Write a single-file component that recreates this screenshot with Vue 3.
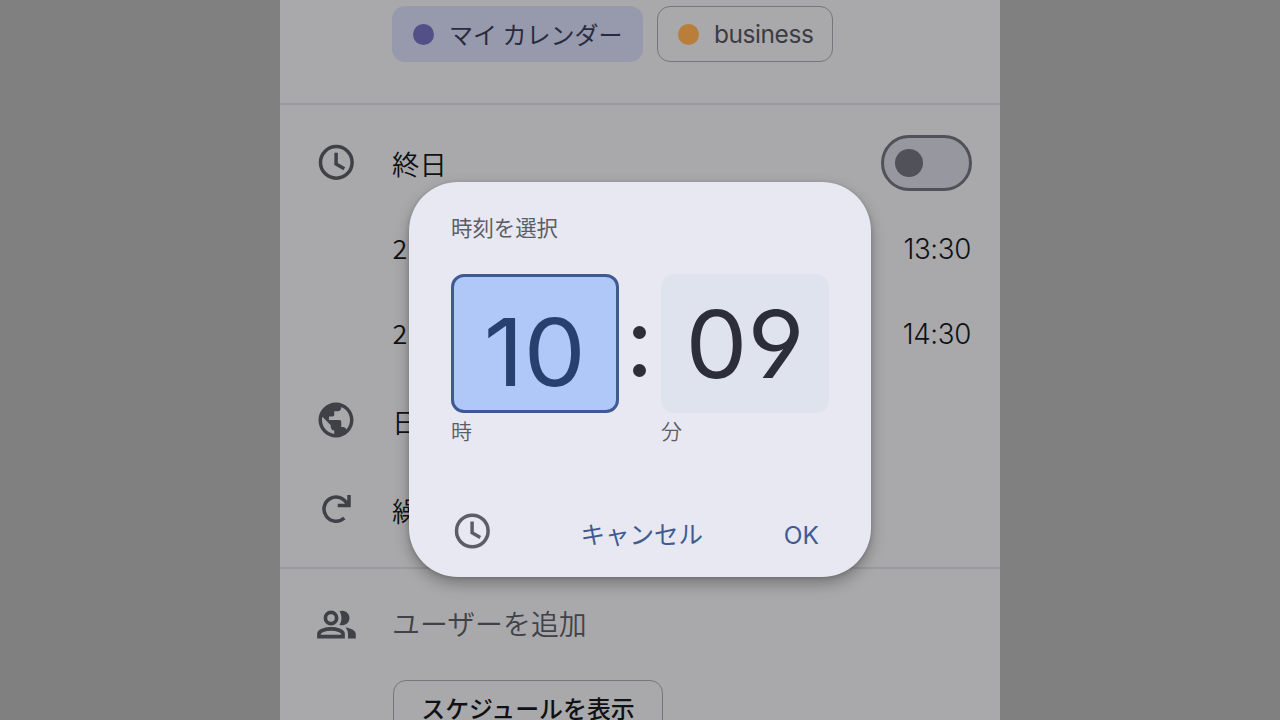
<script setup>
const chips = [
  { label: 'マイ カレンダー', kind: 'mine' },
  { label: 'business', kind: 'business' },
]
</script>

<template>
  <main class="stage">
    <section class="phone">
      <div class="chips">
        <div v-for="c in chips" :key="c.kind" class="chip" :class="c.kind">
          <i class="dot"></i><span>{{ c.label }}</span>
        </div>
      </div>
      <hr />
      <div class="rows">
        <div class="row allday">
          <svg class="icon line" viewBox="0 0 42 42">
            <circle cx="21.3" cy="20.4" r="15.8" /><path d="M21.1 10.8v11.3l8.2 4.7" />
          </svg>
          <span class="label jp">終日</span>
          <span class="switch"><i></i></span>
        </div>
        <div class="row start">
          <span class="label digit">2</span><span class="time">13:30</span>
        </div>
        <div class="row end">
          <span class="label digit">2</span><span class="time">14:30</span>
        </div>
        <div class="row zone">
          <svg class="icon" viewBox="0 0 24 24">
            <path d="M12 2C6.48 2 2 6.48 2 12s4.48 10 10 10 10-4.48 10-10S17.52 2 12 2zm-1 17.93c-3.95-.49-7-3.85-7-7.93 0-.62.08-1.21.21-1.79L9 15v1c0 1.1.9 2 2 2v1.93zm6.9-2.54c-.26-.81-1-1.39-1.9-1.39h-1v-3c0-.55-.45-1-1-1H8v-2h2c.55 0 1-.45 1-1V7h2c1.1 0 2-.9 2-2v-.41c2.93 1.19 5 4.06 5 7.41 0 2.08-.8 3.97-2.1 5.39z" />
          </svg>
          <span class="label jp">日本標準時</span>
        </div>
        <div class="row repeat">
          <svg class="icon line" viewBox="0 0 42 42">
            <path d="M32.2 17.3A12.1 12.1 0 1 0 29.3 31M34 8v10.6H22.7" />
          </svg>
          <span class="label jp">繰り返さない</span>
        </div>
      </div>
      <hr />
      <div class="row people">
        <svg class="icon wide" viewBox="0 0 39 30">
          <g fill="none" stroke="currentColor" stroke-width="3.7">
            <circle cx="14" cy="8" r="5.6" />
            <path d="M2 26.6v-2.6c0-3.3 6.5-5.2 12-5.2s12 1.9 12 5.2v2.6Z" />
          </g>
          <path d="M22.5 1.2a7.3 7.3 0 1 1 0 13.6c2.6-4 2.6-9.6 0-13.6ZM28.5 17.5c5.8.8 10.3 3.1 10.3 6.8v4.2H31v-4.2c0-2.8-.9-5-2.5-6.8Z" />
        </svg>
        <span class="label jp muted">ユーザーを追加</span>
      </div>
      <div class="schedule">スケジュールを表示</div>
    </section>

    <section class="dialog">
      <h1>時刻を選択</h1>
      <div class="picker">
        <div class="field">
          <div class="box active"><span>10</span></div>
          <small>時</small>
        </div>
        <div class="colon"><i></i><i></i></div>
        <div class="field">
          <div class="box"><span>09</span></div>
          <small>分</small>
        </div>
      </div>
      <div class="actions">
        <svg class="icon line" viewBox="0 0 42 42">
          <circle cx="21.3" cy="21" r="15.8" /><path d="M21.1 11.4v11.3l8.2 4.7" />
        </svg>
        <span class="cancel">キャンセル</span>
        <span class="ok">OK</span>
      </div>
    </section>
  </main>
</template>

<style>
body { margin: 0; background: #808080; }
</style>

<style scoped>
* { box-sizing: border-box; }
.stage {
  position: relative;
  width: 1280px;
  height: 720px;
  overflow: hidden;
  background: #808080;
  font-family: Inter, "Noto Sans CJK JP", sans-serif;
  white-space: nowrap;
}
.phone {
  width: 720px;
  height: 720px;
  margin: 0 auto;
  overflow: hidden;
  background: #a9a9ab;
  color: #101114;
}
hr { height: 2px; margin: 0; border: 0; background: #9b9b9f; }
.chips { display: flex; gap: 14px; height: 103px; padding: 6px 0 0 112px; }
.chip {
  display: flex;
  align-items: center;
  height: 56px;
  border-radius: 13px;
  padding-left: 21px;
}
.chip .dot { width: 21px; height: 21px; border-radius: 50%; margin-right: 15px; }
.mine { width: 251px; background: #979aad; color: #292c40; font-family: "Noto Sans CJK JP", sans-serif; font-size: 24px; }
.mine span { margin-top: -2px; }
.mine .dot { background: #535088; }
.business { width: 176px; border: 1.5px solid #77777b; color: #3b3c42; font-size: 24.5px; letter-spacing: -.45px; padding-left: 20px; }
.business .dot { background: #b97e3a; margin-right: 15px; }
.business span { margin-top: -1px; }
.row { display: flex; align-items: center; height: 60px; padding: 0 28px 0 35px; }
.icon { flex: none; width: 42px; height: 42px; fill: currentColor; color: #3f4147; }
.line { fill: none; stroke: currentColor; stroke-width: 3.5; }
.label { margin-left: 35px; font-size: 27.4px; }
.jp { font-family: "Noto Sans CJK JP", sans-serif; font-weight: 350; }
.digit { margin: -2px 0 0 77.5px; font-family: "Noto Sans CJK JP", sans-serif; font-weight: 350; font-size: 27px; }
.muted { color: #414248; font-size: 27.9px; }
.zone .jp { margin-top: 1px; }
.repeat .jp { margin-top: 3px; }
.time { margin: 2px 1px 0 auto; font-size: 27.7px; font-weight: 330; letter-spacing: -.35px; }
.rows { height: 462px; padding-top: 28px; }
.start, .end { margin-top: 25px; }
.zone { margin-top: 27px; }
.repeat { margin-top: 28px; }
.switch {
  display: flex;
  align-items: center;
  width: 91px;
  height: 56px;
  margin-left: auto;
  padding-left: 11px;
  border: 3px solid #505159;
  border-radius: 28px;
  background: #96979f;
}
.switch i { width: 28px; height: 28px; border-radius: 50%; background: #505159; }
.people { margin-top: 24px; }
.wide { width: 39px; height: 30px; margin: 3px 1px 0 2px; }
.schedule {
  width: 270px;
  height: 56px;
  margin: 27px 0 0 113px;
  border: 1.5px solid #77777b;
  border-radius: 13px;
  text-align: center;
  font-family: "Noto Sans CJK JP", sans-serif;
  font-size: 23.9px;
  line-height: 54px;
  font-weight: 500;
}
.dialog {
  position: absolute;
  left: 409px;
  top: 182px;
  width: 462px;
  height: 395px;
  padding: 0 42px;
  border-radius: 49px;
  background: #e7e8f1;
  box-shadow: 0 7px 15px rgba(0, 0, 0, .28), 0 1px 4px rgba(0, 0, 0, .16);
  color: #5c5d66;
}
h1 { height: 92px; margin: 0; padding-top: 30px; font-size: 21.4px; line-height: 32px; font-weight: 400; }
.picker { display: flex; height: 224px; }
.field small { display: block; font-size: 21px; line-height: 35px; font-weight: 350; font-family: "Noto Sans CJK JP", sans-serif; }
.box {
  display: flex;
  justify-content: center;
  align-items: center;
  width: 168px;
  height: 139px;
  border-radius: 13px;
  background: #dfe3ee;
  color: #2c2f3a;
  font-size: 94px;
  font-weight: 380;
  line-height: 1;
  font-feature-settings: "cv04" 1;
}
.box span { transform: scaleX(1.045); }
.box.active { border: 3px solid #3f5a93; background: #afc8f8; color: #27406e; padding-top: 17px; }
.colon { display: flex; flex-direction: column; align-items: center; gap: 25px; width: 41px; margin-right: 1px; padding-top: 52px; }
.colon i { width: 13px; height: 13px; border-radius: 50%; background: #2c2f3a; }
.actions { display: flex; align-items: center; height: 66px; color: #415b91; }
.actions .icon { color: #5c5d66; }
.cancel { margin-left: 87.5px; font-size: 24.5px; padding-top: 5px; font-family: "Noto Sans CJK JP", sans-serif; }
.ok { margin-left: auto; margin-right: 10px; font-size: 24.5px; padding-top: 8px; }
</style>
